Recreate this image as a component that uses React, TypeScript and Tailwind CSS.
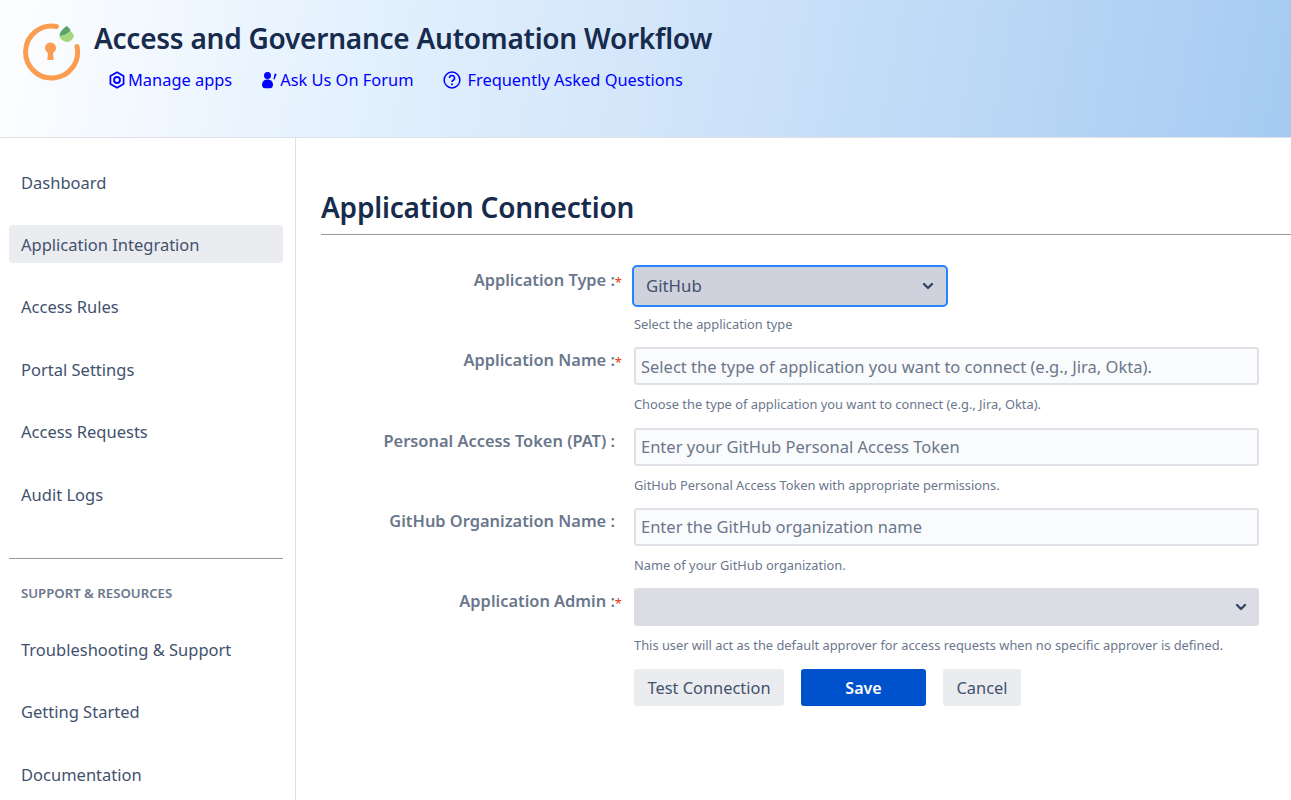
import React from 'react';
import { ChevronDown } from 'lucide-react';

const topNav = ['Dashboard', 'Application Integration', 'Access Rules', 'Portal Settings', 'Access Requests', 'Audit Logs'];
const bottomNav = ['Troubleshooting & Support', 'Getting Started', 'Documentation'];

function Logo() {
  return (
    <svg width="60" height="60" viewBox="0 0 60 60" className="shrink-0">
      <path d="M35.500 4.500A26 26 0 1 0 56 24.500" fill="none" stroke="#fb9d51" strokeWidth="5" strokeLinecap="round" />
      <circle cx="29.500" cy="26" r="5.500" fill="#fb9d51" />
      <path d="M27.300 28h4.400l1 10h-6.400z" fill="#fb9d51" />
      <path d="M38.500 14c0-4 3-7 7-10 2 1 4 3 4 5-3 3-7 5-11 5z" fill="#5da46b" />
      <path d="M38.500 14c4 0 8-2 11-5 2 2 3 3 3.500 5-1 3-3 5-5.500 6-4 0-8-2-9-6z" fill="#a4d77f" />
    </svg>
  );
}

function AppsIcon() {
  return (
    <svg width="16" height="18" viewBox="0 0 16 18" className="shrink-0">
      <path d="M8 1.300l6.600 3.800v7.800L8 16.700l-6.600-3.800V5.100z" fill="none" stroke="#0000ff" strokeWidth="1.700" strokeLinejoin="round" />
      <circle cx="8" cy="9" r="3" fill="none" stroke="#0000ff" strokeWidth="1.800" />
    </svg>
  );
}

function ForumIcon() {
  return (
    <svg width="15" height="17" viewBox="0 0 15 17" className="shrink-0">
      <circle cx="5.500" cy="3.600" r="3.500" fill="#0000ff" />
      <path d="M0 13c0-3.400 2-5.500 5.500-5.500S11 9.600 11 13c0 2-1.500 3.300-3 3.300H3C1.500 16.300 0 15 0 13z" fill="#0000ff" />
      <path d="M12.700 1.500l1.900.4-2 5.600-1.200-.4z" fill="#0000ff" />
    </svg>
  );
}

function HelpIcon() {
  return (
    <svg width="18" height="18" viewBox="0 0 18 18" className="shrink-0">
      <circle cx="9" cy="9" r="7.900" fill="none" stroke="#0000ff" strokeWidth="1.500" />
      <path d="M6.500 7a2.500 2.500 0 1 1 3.700 2.200c-.8.5-1.200.9-1.200 1.800" fill="none" stroke="#0000ff" strokeWidth="1.600" />
      <circle cx="9" cy="13.200" r="1" fill="#0000ff" />
    </svg>
  );
}

function NavItem({ label, active }: { label: string; active?: boolean }) {
  return (
    <div className={`h-[38px] flex items-center px-3 pt-[2px] rounded text-[16.500px] text-[#42526e] ${active ? 'bg-[#ebecf0]' : ''}`}>
      {label}
    </div>
  );
}

function Field({ label, required, help, children }: { label: string; required?: boolean; help: string; children: React.ReactNode }) {
  return (
    <div className="flex">
      <div className="w-[301px] shrink-0 pt-[2px] pr-[7px] text-right text-[16.400px] leading-[22px] font-semibold text-[#6b778c] relative">
        {label}
        {required && <span className="absolute right-0 top-[4px] text-[13px] font-normal text-[#de350b]">*</span>}
      </div>
      <div className="ml-[12px] flex-1">
        {children}
        <p className="mt-[11px] text-[12.850px] leading-[16px] text-[#6b778c]">{help}</p>
      </div>
    </div>
  );
}

function TextInput({ placeholder }: { placeholder: string }) {
  return (
    <div className="w-[625px] h-[38px] flex items-center px-[5px] pt-[2px] rounded-[3px] border-2 border-[#dfe1e6] bg-[#fafbfc] text-[16.500px] text-[#6b778c] truncate">
      {placeholder}
    </div>
  );
}

export default function App() {
  return (
    <div className="h-screen overflow-hidden flex flex-col bg-white font-['Noto_Sans',sans-serif]">
      <header className="h-[138px] shrink-0 flex items-start gap-[13px] pl-[21px] pt-[21px] border-b border-[#dfe1e6] bg-[linear-gradient(100deg,#fdfeff_0%,#e6f2fe_25%,#d3e6fa_50%,#a5cbf2_100%)]">
        <div className="mt-[1px]"><Logo /></div>
        <div>
          <h1 className="text-[28px] leading-[34px] font-semibold tracking-[-0.25px] text-[#172b4d]">Access and Governance Automation Workflow</h1>
          <nav className="mt-[13px] ml-[15px] flex items-center text-[16.400px] leading-[24px] text-[#0000ff]">
            <a className="flex items-center gap-[3px]"><AppsIcon />Manage apps</a>
            <a className="ml-[30px] flex items-center gap-[3px]"><ForumIcon />Ask Us On Forum</a>
            <a className="ml-[30px] flex items-center gap-[6px]"><HelpIcon />Frequently Asked Questions</a>
          </nav>
        </div>
      </header>
      <div className="flex flex-1 min-h-0">
        <aside className="w-[296px] shrink-0 border-r border-[#dfe1e6] px-[9px] pt-[25px]">
          <div className="w-[274px] flex flex-col gap-[24.400px]">
            {topNav.map((n) => <NavItem key={n} label={n} active={n === 'Application Integration'} />)}
          </div>
          <hr className="w-[274px] mt-[45.500px] border-t border-[#9a9a9a]" />
          <div className="mt-[26px] px-3 text-[13.200px] leading-[16px] font-semibold text-[#6b778c]">SUPPORT &amp; RESOURCES</div>
          <div className="w-[274px] mt-[29px] flex flex-col gap-[24.400px]">
            {bottomNav.map((n) => <NavItem key={n} label={n} />)}
          </div>
        </aside>
        <main className="flex-1 min-w-0 pl-[25px] pt-[49px]">
          <h2 className="text-[28px] leading-[40px] font-semibold tracking-[-0.2px] text-[#172b4d]">Application Connection</h2>
          <hr className="mt-[7px] border-t border-[#9a9a9a]" />
          <div className="mt-[32px] flex flex-col gap-[15.250px]">
            <Field label="Application Type :" required help="Select the application type">
              <div className="-ml-[2px] -my-[2px] w-[316px] h-[42px] flex items-center justify-between pl-[12px] pr-[10px] rounded-[5px] border-2 border-[#2684ff] bg-[#cfd1dc] text-[16.800px] text-[#42526e]">
                GitHub
                <ChevronDown size={16} strokeWidth={3.600} className="text-[#344563]" />
              </div>
            </Field>
            <Field label="Application Name :" required help="Choose the type of application you want to connect (e.g., Jira, Okta).">
              <TextInput placeholder="Select the type of application you want to connect (e.g., Jira, Okta)." />
            </Field>
            <Field label="Personal Access Token (PAT) :" help="GitHub Personal Access Token with appropriate permissions.">
              <TextInput placeholder="Enter your GitHub Personal Access Token" />
            </Field>
            <Field label="GitHub Organization Name :" help="Name of your GitHub organization.">
              <TextInput placeholder="Enter the GitHub organization name" />
            </Field>
            <Field label="Application Admin :" required help="This user will act as the default approver for access requests when no specific approver is defined.">
              <div className="w-[625px] h-[38px] flex items-center justify-end pr-[10px] rounded-[3px] bg-[#dcdde4]">
                <ChevronDown size={16} strokeWidth={3.600} className="text-[#344563]" />
              </div>
            </Field>
          </div>
          <div className="mt-[16px] ml-[313px] flex gap-[17px]">
            <button className="w-[150px] h-[37px] pt-[2px] rounded-[3px] bg-[#ebecf0] text-[16.400px] text-[#42526e]">Test Connection</button>
            <button className="w-[125px] h-[37px] rounded-[3px] bg-[#0052cc] text-[16px] font-semibold text-white">Save</button>
            <button className="w-[78px] h-[37px] pt-[2px] rounded-[3px] bg-[#ebecf0] text-[16.400px] text-[#42526e]">Cancel</button>
          </div>
        </main>
      </div>
    </div>
  );
}
